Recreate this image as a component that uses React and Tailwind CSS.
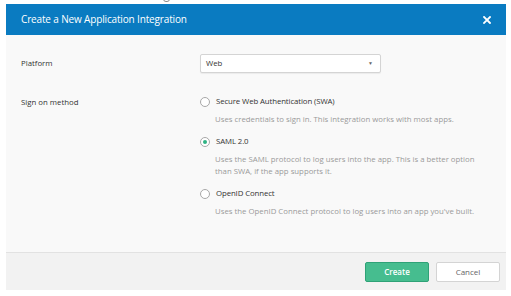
import React, { useState } from "react";

const font = { fontFamily: '"Open Sans", "Liberation Sans", sans-serif' };

const options = [
  {
    id: "swa",
    label: "Secure Web Authentication (SWA)",
    desc: ["Uses credentials to sign in. This integration works with most apps."],
  },
  {
    id: "saml",
    label: "SAML 2.0",
    desc: [
      "Uses the SAML protocol to log users into the app. This is a better option",
      "than SWA, if the app supports it.",
    ],
  },
  {
    id: "oidc",
    label: "OpenID Connect",
    desc: ["Uses the OpenID Connect protocol to log users into an app you've built."],
  },
];

const Radio = ({ checked }) => (
  <span className="w-[10px] h-[10px] rounded-full border border-[#a8a8a8] bg-white flex items-center justify-center shrink-0">
    {checked && <span className="w-[4px] h-[4px] rounded-full bg-[#2fb383]" />}
  </span>
);

const App = () => {
  const [method, setMethod] = useState("saml");

  return (
    <div className="w-[511px] h-[296px] bg-white relative overflow-hidden" style={font}>
      <span className="absolute left-[163px] top-[-4px] w-[7px] h-[6px] rounded-full border border-[#8a8a8a]" />
      <div className="ml-[6px] mt-[4px] w-[500px]">
        <div className="h-[31px] bg-[#0a7bc1] flex items-center justify-between pl-[15px] pr-[15px]">
          <span className="text-white text-[10px] tracking-[-0.15px]">
            Create a New Application Integration
          </span>
          <svg width="8" height="8" viewBox="0 0 8 8">
            <path d="M1 1L7 7M7 1L1 7" stroke="white" strokeWidth="1.8" strokeLinecap="square" />
          </svg>
        </div>

        <div className="bg-[#f9f9f9] h-[217px] pt-[19px]">
          <div className="flex items-center h-[19px]">
            <span className="w-[194px] pl-[15px] text-[7.8px] text-[#333]">Platform</span>
            <div className="w-[181px] h-[19px] bg-white border border-[#d4d4d4] rounded-[2px] shadow-[0_1px_1px_rgba(0,0,0,0.06)] flex items-center justify-between pl-[5px] pr-[7px]">
              <span className="text-[7.8px] text-[#333]">Web</span>
              <span className="text-[5px] text-[#666]">▼</span>
            </div>
          </div>

          <div className="flex mt-[24px]">
            <span className="w-[194px] pl-[15px] text-[7.8px] text-[#333] leading-[10px]">
              Sign on method
            </span>
            <div className="flex flex-col gap-[12px]">
              {options.map((o) => (
                <div key={o.id} className="cursor-pointer" onClick={() => setMethod(o.id)}>
                  <div className="flex items-center gap-[6px] h-[10px]">
                    <Radio checked={method === o.id} />
                    <span className="text-[7.8px] text-[#333] tracking-[-0.1px]">{o.label}</span>
                  </div>
                  <div className="pl-[15px] mt-[6px] flex flex-col">
                    {o.desc.map((d) => (
                      <span key={d} className="text-[7.8px] leading-[12px] text-[#9a9a9a]">
                        {d}
                      </span>
                    ))}
                  </div>
                </div>
              ))}
            </div>
          </div>
        </div>

        <div className="bg-[#f2f2f2] border-t border-[#e2e2e2] h-[38px] flex items-center justify-end gap-[7px] pr-[6px]">
          <button className="w-[64px] h-[20px] rounded-[2px] bg-[#46bd8f] border border-[#2fa277] text-white text-[8px] font-semibold">
            Create
          </button>
          <button className="w-[64px] h-[20px] rounded-[2px] bg-white border border-[#d4d4d4] text-[#666] text-[8px]">
            Cancel
          </button>
        </div>
      </div>
    </div>
  );
};

export default App;
